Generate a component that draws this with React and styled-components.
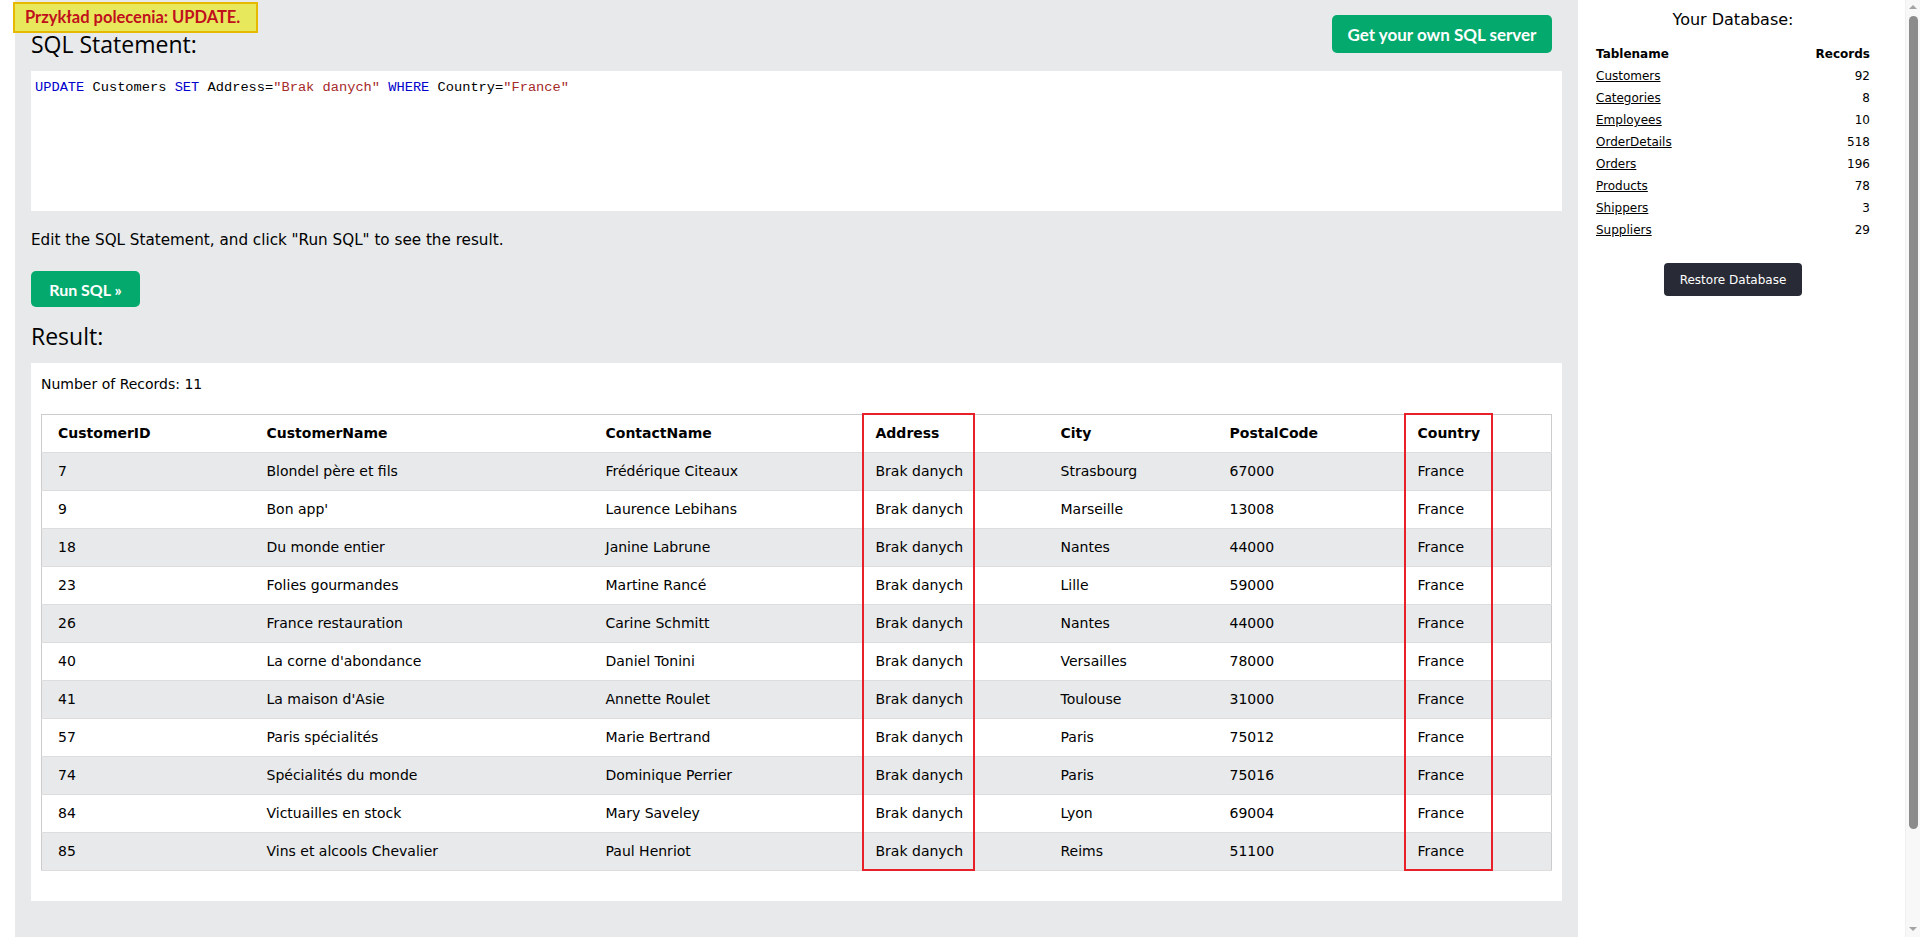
import styled, { createGlobalStyle } from 'styled-components';

const GlobalStyle = createGlobalStyle`
  html, body {
    overflow: hidden;
  }
  body {
    margin: 0;
    background: #fff;
    color: #000;
    font-family: Verdana, "DejaVu Sans", sans-serif;
    font-size: 14px;
    line-height: 1.5;
  }
`;

const tables = [
  ['Customers', 92],
  ['Categories', 8],
  ['Employees', 10],
  ['OrderDetails', 518],
  ['Orders', 196],
  ['Products', 78],
  ['Shippers', 3],
  ['Suppliers', 29],
];

const columns = [
  { name: 'CustomerID', width: 217 },
  { name: 'CustomerName', width: 339 },
  { name: 'ContactName', width: 270 },
  { name: 'Address', width: 185 },
  { name: 'City', width: 169 },
  { name: 'PostalCode', width: 188 },
  { name: 'Country', width: 142 },
];

const rows = [
  [7, 'Blondel père et fils', 'Frédérique Citeaux', 'Strasbourg', '67000'],
  [9, "Bon app'", 'Laurence Lebihans', 'Marseille', '13008'],
  [18, 'Du monde entier', 'Janine Labrune', 'Nantes', '44000'],
  [23, 'Folies gourmandes', 'Martine Rancé', 'Lille', '59000'],
  [26, 'France restauration', 'Carine Schmitt', 'Nantes', '44000'],
  [40, "La corne d'abondance", 'Daniel Tonini', 'Versailles', '78000'],
  [41, "La maison d'Asie", 'Annette Roulet', 'Toulouse', '31000'],
  [57, 'Paris spécialités', 'Marie Bertrand', 'Paris', '75012'],
  [74, 'Spécialités du monde', 'Dominique Perrier', 'Paris', '75016'],
  [84, 'Victuailles en stock', 'Mary Saveley', 'Lyon', '69004'],
  [85, 'Vins et alcools Chevalier', 'Paul Henriot', 'Reims', '51100'],
];

export default function App() {
  return (
    <>
      <GlobalStyle />
      <Label>Przykład polecenia: UPDATE.</Label>
      <Page>
        <Main>
          <TopBar>
            <Heading>SQL Statement:</Heading>
            <ServerButton>Get your own SQL server</ServerButton>
          </TopBar>
          <CodeBox>
            <Kw>UPDATE</Kw> Customers <Kw>SET</Kw> Address=<Str>"Brak danych"</Str> <Kw>WHERE</Kw> Country=<Str>"France"</Str>
          </CodeBox>
          <Hint>Edit the SQL Statement, and click "Run SQL" to see the result.</Hint>
          <RunButton>Run SQL »</RunButton>
          <ResultHeading>Result:</ResultHeading>
          <ResultBox>
            <div>Number of Records: 11</div>
            <TableWrap>
              <ResultTable>
                <colgroup>
                  {columns.map(c => <col key={c.name} style={{ width: c.width }} />)}
                </colgroup>
                <thead>
                  <tr>
                    {columns.map(c => <th key={c.name}>{c.name}</th>)}
                  </tr>
                </thead>
                <tbody>
                  {rows.map(r => (
                    <tr key={r[0]}>
                      <td>{r[0]}</td>
                      <td>{r[1]}</td>
                      <td>{r[2]}</td>
                      <td>Brak danych</td>
                      <td>{r[3]}</td>
                      <td>{r[4]}</td>
                      <td>France</td>
                    </tr>
                  ))}
                </tbody>
              </ResultTable>
              <Mark $left={821} $width={113} />
              <Mark $left={1363} $width={89} />
            </TableWrap>
          </ResultBox>
        </Main>
        <Sidebar>
          <SideTitle>Your Database:</SideTitle>
          <DbTable>
            <thead>
              <tr>
                <th>Tablename</th>
                <th>Records</th>
              </tr>
            </thead>
            <tbody>
              {tables.map(([name, count]) => (
                <tr key={name}>
                  <td><DbLink href="#">{name}</DbLink></td>
                  <td>{count}</td>
                </tr>
              ))}
            </tbody>
          </DbTable>
          <RestoreButton>Restore Database</RestoreButton>
        </Sidebar>
      </Page>
      <Scrollbar>
        <Arrow $dir="up" />
        <Thumb />
        <Arrow $dir="down" />
      </Scrollbar>
    </>
  );
}

const Label = styled.div`
  position: absolute;
  top: 2px;
  left: 13px;
  z-index: 5;
  box-sizing: border-box;
  width: 245px;
  height: 31px;
  padding: 0 0 0 10px;
  background: #e8e85c;
  border: 2px solid #e6b800;
  color: #c0101c;
  font-family: Lato, "Open Sans", sans-serif;
  font-weight: 700;
  font-size: 16.5px;
  line-height: 27px;
  white-space: nowrap;
`;

const Page = styled.div`
  display: flex;
  width: 1905px;
  padding-left: 15px;
  box-sizing: border-box;
`;

const Main = styled.div`
  flex: 1;
  min-height: 937px;
  box-sizing: border-box;
  background: #e7e9eb;
  padding: 15px 16px 0 16px;
`;

const TopBar = styled.div`
  display: flex;
  justify-content: space-between;
  align-items: flex-start;
`;

const Heading = styled.h3`
  margin: 12px 0 0 0;
  font-family: "Open Sans", "Segoe UI", sans-serif;
  font-weight: 400;
  font-size: 23px;
  line-height: 34px;
`;

const GreenButton = styled.button`
  background: #04aa6d;
  color: #fff;
  border: none;
  border-radius: 5px;
  font-family: Lato, "Open Sans", sans-serif;
  font-weight: 700;
  cursor: pointer;
`;

const ServerButton = styled(GreenButton)`
  width: 220px;
  height: 38px;
  margin-right: 10px;
  font-size: 17px;
`;

const CodeBox = styled.div`
  margin-top: 10px;
  height: 140px;
  box-sizing: border-box;
  padding: 7px 4px;
  background: #fff;
  font-family: "Liberation Mono", monospace;
  font-size: 13.7px;
  line-height: 20px;
  white-space: pre;
`;

const Kw = styled.span`
  color: #0000cd;
`;

const Str = styled.span`
  color: #a52a2a;
`;

const Hint = styled.p`
  margin: 19px 0 0 0;
  font-size: 15.2px;
  line-height: 21px;
`;

const RunButton = styled(GreenButton)`
  display: block;
  margin-top: 20px;
  width: 109px;
  height: 36px;
  font-size: 16px;
`;

const ResultHeading = styled(Heading)`
  margin-top: 12px;
`;

const ResultBox = styled.div`
  margin-top: 10px;
  background: #fff;
  padding: 11px 10px 30px 10px;
  line-height: 21px;
`;

const TableWrap = styled.div`
  position: relative;
  margin-top: 19px;
`;

const ResultTable = styled.table`
  width: 100%;
  table-layout: fixed;
  border-collapse: collapse;
  border: 1px solid #ccc;

  tr {
    border-bottom: 1px solid #ddd;
  }
  tbody tr:nth-child(odd) {
    background: #e7e9eb;
  }
  th, td {
    padding: 8px;
    text-align: left;
    vertical-align: top;
    line-height: 21px;
    white-space: nowrap;
  }
  th:first-child, td:first-child {
    padding-left: 16px;
  }
  th {
    font-weight: 700;
  }
`;

const Mark = styled.div`
  position: absolute;
  top: -1px;
  bottom: 0;
  left: ${p => p.$left}px;
  width: ${p => p.$width}px;
  box-sizing: border-box;
  border: 2px solid #e8202a;
  pointer-events: none;
`;

const Sidebar = styled.div`
  flex: none;
  width: 327px;
  box-sizing: border-box;
  padding: 8px 35px 0 18px;
  display: flex;
  flex-direction: column;
  align-items: center;
`;

const SideTitle = styled.div`
  font-size: 16px;
  line-height: 24px;
`;

const DbTable = styled.table`
  margin-top: 11px;
  width: 100%;
  border-collapse: collapse;
  font-size: 12px;

  th, td {
    padding: 0;
    line-height: 22px;
    text-align: left;
  }
  th:last-child, td:last-child {
    text-align: right;
  }
`;

const DbLink = styled.a`
  color: #000;
  text-decoration: underline;
`;

const RestoreButton = styled.button`
  margin-top: 22px;
  width: 138px;
  height: 33px;
  background: #282a35;
  color: #fff;
  border: none;
  border-radius: 4px;
  font-family: Verdana, "DejaVu Sans", sans-serif;
  font-size: 12px;
  cursor: pointer;
`;

const Scrollbar = styled.div`
  position: fixed;
  top: 0;
  right: 0;
  width: 15px;
  height: 100vh;
  background: #f8f8f8;
  border-left: 1px solid #f0f0f0;
  box-sizing: border-box;
  display: flex;
  flex-direction: column;
  align-items: center;
`;

const Arrow = styled.div`
  width: 0;
  height: 0;
  margin: ${p => (p.$dir === 'up' ? '5px 0 4px' : 'auto 0 6px')};
  border-left: 4px solid transparent;
  border-right: 4px solid transparent;
  ${p => (p.$dir === 'up'
    ? 'border-bottom: 4px solid #a3a3a3;'
    : 'border-top: 4px solid #a3a3a3;')}
`;

const Thumb = styled.div`
  width: 9px;
  height: 813px;
  margin-top: 3px;
  border-radius: 5px;
  background: #8c8c8c;
`;
